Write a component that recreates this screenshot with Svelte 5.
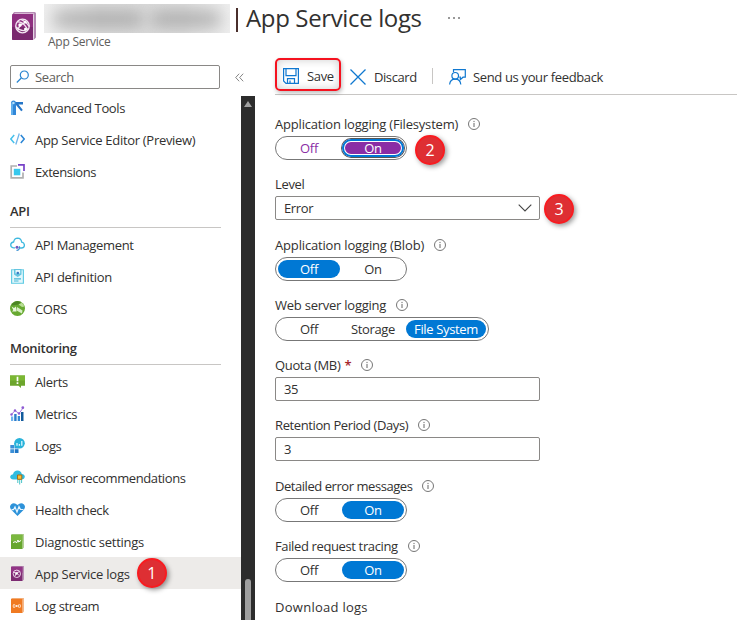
<script>
  const groups = [
    { title: '', items: [
      { label: 'Advanced Tools', icon: 'tools' },
      { label: 'App Service Editor (Preview)', icon: 'code', track: -0.3 },
      { label: 'Extensions', icon: 'ext', track: -0.45 },
    ] },
    { title: 'API', items: [
      { label: 'API Management', icon: 'cloud' },
      { label: 'API definition', icon: 'def', track: -0.28 },
      { label: 'CORS', icon: 'cors' },
    ] },
    { title: 'Monitoring', items: [
      { label: 'Alerts', icon: 'alerts' },
      { label: 'Metrics', icon: 'metrics' },
      { label: 'Logs', icon: 'logs' },
      { label: 'Advisor recommendations', icon: 'advisor', track: -0.4 },
      { label: 'Health check', icon: 'health' },
      { label: 'Diagnostic settings', icon: 'diag', track: -0.25 },
      { label: 'App Service logs', icon: 'book', step: 1, track: -0.22 },
      { label: 'Log stream', icon: 'stream' },
    ] },
  ];

  const fields = [
    { label: 'Application logging (Filesystem)', info: true, options: ['Off', 'On'], value: 'On', focus: true, step: 2, track: -0.19 },
    { label: 'Level', select: 'Error', step: 3 },
    { label: 'Application logging (Blob)', info: true, options: ['Off', 'On'], value: 'Off', gap: 13, track: -0.16 },
    { label: 'Web server logging', info: true, options: ['Off', 'Storage', 'File System'], value: 'File System', track: -0.24 },
    { label: 'Quota (MB)', required: true, info: true, input: '35' },
    { label: 'Retention Period (Days)', info: true, input: '3', track: -0.39 },
    { label: 'Detailed error messages', info: true, options: ['Off', 'On'], value: 'On', gap: 13, track: -0.45 },
    { label: 'Failed request tracing', info: true, options: ['Off', 'On'], value: 'On', track: -0.37 },
  ];
</script>

{#snippet bookIcon(w, h)}
  <svg width={w} height={h} viewBox="0 0 24 28">
    <path d="M2 0h20.500q1.500 0 1.500 1.500v24l-2.500 2.500V3H0z" fill="#b58ab3" />
    <path d="M2.500 1h19v25h-19z" fill="#f1e5f0" />
    <path d="M1.500 1.800H21V28H1.500Q0 28 0 26.500V3.300Q0 1.800 1.500 1.800z" fill="#8f2f80" />
    <path d="M0 15h21v13H0z" fill="#6f2766" opacity=".65" />
    <g fill="none" stroke="#f4e8f3" stroke-width="1.300">
      <circle cx="10.500" cy="14" r="6.800" />
      <path d="M5.500 10q5-1 10 7M6 18.500q1-7 9.500-8.500M4 15q6 6 12 2M9 7.500q6 3 8 7" />
    </g>
    <g fill="#fff"><circle cx="8" cy="13" r="1.700" /><circle cx="13.500" cy="17" r="1.500" /><circle cx="13" cy="10" r="1.300" /></g>
  </svg>
{/snippet}

{#snippet navIcon(name)}
  {#if name === 'book'}
    <svg width="15" height="15" viewBox="0 0 15 15">
      <path d="M2.500 0H14v13.500L12.500 15V1H1z" fill="#bb93b8" /><path d="M1 .8h11.500V15H1z" fill="#7d2b72" /><path d="M1 .8h11.500v6H1z" fill="#923485" />
      <circle cx="6.800" cy="7.800" r="3.700" fill="none" stroke="#ecd5ea" /><path d="M4 6.500q3-.5 5 3M5 10q.5-3.500 4.500-4.500" fill="none" stroke="#ecd5ea" /><circle cx="6.500" cy="7.500" r="1.200" fill="#fff" />
    </svg>
  {:else}
    <svg width="15" height="15" viewBox="0 0 15 15">
      {#if name === 'tools'}
        <path d="M1 3.500Q1 .5 3.500.5T6 3.500V15H1z" fill="#3187d8" />
        <path d="M1 3.500V15h2V2z" fill="#62b0ed" />
        <circle cx="3.500" cy="3" r="1.200" fill="#b6e1fa" />
        <path d="M5.500 2H13v2.500H8.500L12.800 10l-1.600 1.300L6 5z" fill="#2576c8" />
      {:else if name === 'code'}
        <path d="M4.200 3L.8 7l3.400 4" fill="none" stroke="#45c1ec" stroke-width="1.500" />
        <path d="M10.800 3l3.400 4-3.400 4" fill="none" stroke="#2b86d6" stroke-width="1.500" />
        <path d="M9.300 1.500L5.800 12.500" stroke="#6fb5ea" stroke-width="1.300" />
      {:else if name === 'ext'}
        <path d="M7 2H1.200v11.800H13V8.500" fill="none" stroke="#b0b0b0" stroke-width="1.700" />
        <path d="M3.800 4.800h6.500v6.500H3.800z" fill="#37c8ed" />
        <path d="M8 .9h6v6" fill="none" stroke="#7742c8" stroke-width="1.700" />
      {:else if name === 'cloud'}
        <path d="M5 10.800H3.500Q.7 10.500.7 7.800 1 5.200 3.600 5 4.400 1.200 7.700 1.200q3.500.2 4 4 2.700.5 2.700 3 0 2.600-2.900 2.800H9.500" fill="none" stroke="#3fb9df" stroke-width="1.300" />
        <circle cx="7" cy="10.300" r="1.500" fill="#7456bd" /><path d="M6.500 13.300q3.300 0 3-4" fill="none" stroke="#3a91d3" stroke-width="1.200" />
      {:else if name === 'def'}
        <path d="M1 .3h13v14.500H1z" fill="#63cce4" /><path d="M2.200 1.200h10.600v12.600H2.200z" fill="#e2f6fb" />
        <path d="M4 0h7.500v5.500L7.700 8 4 5.500z" fill="#65c5e0" /><path d="M5.500 1h4.700v3.500H5.500z" fill="#e8f8fc" />
        <circle cx="7.800" cy="4" r="1.300" fill="#397ac4" /><path d="M4 9.800h7M4 12h4.500" stroke="#45b8d8" stroke-width="1.200" />
      {:else if name === 'cors'}
        <circle cx="7.500" cy="7.500" r="7.500" fill="#67a931" />
        <path d="M1 4.500Q3 1 7.500.1L11 1 8.500 3.500 5 4z" fill="#4c8524" />
        <path d="M8.500 3.500L12 1.800 14.500 5.500 12 6z" fill="#b9df95" />
        <path d="M1.500 5.500L4 7l2-1.500.5 5H2l1.300-1.500z" fill="#e9f6dd" />
        <path d="M7 6l5.500 3.500-.5 3-5.500-3z" fill="#d8efc4" />
      {:else if name === 'alerts'}
        <path d="M0 1.500h15v10.200h-4V14l-2.500-2.300H0z" fill="#6ca52c" /><path d="M0 1.500h15v5H0z" fill="#7bb733" />
        <path d="M7.500 2.700v4.500M7.500 8.300v1.600" stroke="#fff" stroke-width="1.700" />
      {:else if name === 'metrics'}
        <path d="M1 10.500h2.200V15H1z" fill="#6fb2ee" /><path d="M4.200 8h2.400v7H4.200z" fill="#2b7ccb" /><path d="M7.700 10h2.300v5H7.700z" fill="#3288d3" /><path d="M11 6h2.500v9H11z" fill="#125a9c" />
        <path d="M1.500 8.500L5 4.500l4 3L13 2" fill="none" stroke="#a176dc" /><g fill="#8e5bd3"><circle cx="1.500" cy="8.500" r="1.200" /><circle cx="5" cy="4.500" r="1.200" /><circle cx="9" cy="7.500" r="1.200" /><circle cx="12.800" cy="1.700" r="1.400" /></g>
      {:else if name === 'logs'}
        <path d="M.3 7h3.800v3.500H.3zM.3 11.200h3.800V15H.3z" fill="#3b8fd7" /><path d="M4.800 11.200h3.700V15H4.800z" fill="#1e75c4" /><path d="M4.800 7h3.700v3.500H4.800z" fill="#3b8fd7" />
        <circle cx="9.500" cy="5.300" r="5.300" fill="#29b3da" /><path d="M4.500 10.500V5h4z" fill="#29b3da" /><path d="M7 7.800V5M9.400 7.800V6M11.800 7.800V3" stroke="#d9f6ff" stroke-width="1.300" />
      {:else if name === 'advisor'}
        <path d="M3.300 9.500Q0 9 .2 6.500.5 4.500 3 4.200 4 .5 7.500.5q3.500.1 4.300 3.600 3 .3 3 2.900-.2 2.300-3 2.500z" fill="#2fbce0" />
        <path d="M7.800 9v4M9.700 9v5.500M11.600 9v4" stroke="#4cc5c9" /><path d="M7.500 5h4.300v4.300H7.500z" fill="#f8c136" stroke="#a86b15" />
      {:else if name === 'health'}
        <path d="M7.500 14L1 7.500Q-1 4.700 1 2.500 4-.4 7.500 3 11-.4 14 2.500q2 2.200 0 5z" fill="#2d92d9" />
        <path d="M1.500 7.700h2L5 5l2 5 2-5.500 1.500 3h3" fill="none" stroke="#e6f5ff" stroke-width="1.200" />
      {:else if name === 'diag'}
        <path d="M2 0h12v13.500L12.500 15V1.500H1z" fill="#b4cf95" /><path d="M1 .8h11.500V15H1z" fill="#66a62e" /><path d="M1 .8h11.500v6H1z" fill="#7bb83f" />
        <path d="M3 8.500l2.500-1 1 1.500 1.500-3 .5 2 2.500-1.500" fill="none" stroke="#fff" />
      {:else if name === 'stream'}
        <path d="M2 0h12v13.500L12.500 15V1.500H1z" fill="#f4b98b" /><path d="M1 .8h11.500V15H1z" fill="#f07a22" />
        <circle cx="6.800" cy="8" r=".9" fill="#fff" /><path d="M3.800 6.200q-1.500 1.800 0 3.600M9.800 6.200q1.500 1.800 0 3.600M4.500 6.200q1.500 1.800 0 3.600M9.100 6.200q-1.500 1.800 0 3.600" fill="none" stroke="#ffe6d2" stroke-width=".9" />
      {/if}
    </svg>
  {/if}
{/snippet}

<div class="page">
  <header>
    <div class="logo">{@render bookIcon(24, 28)}</div>
    <div class="heading">
      <div class="title-row">
        <div class="redacted"><i class="a"></i><i class="b"></i></div>
        <span class="bar"></span>
        <h1>App Service logs</h1>
        <span class="more"><i></i><i></i><i></i></span>
      </div>
      <div class="kind">App Service</div>
    </div>
  </header>

  <div class="body">
    <aside>
      <div class="search-row">
        <div class="search">
          <svg width="14" height="14" viewBox="0 0 14 14" fill="none" stroke="#2a85d0" stroke-width="1.200"><circle cx="8.300" cy="5" r="4" /><path d="M5.300 8L.8 12.500" /></svg>
          <span>Search</span>
        </div>
        <svg class="collapse" width="9" height="9" viewBox="0 0 9 9" fill="none" stroke="#777" stroke-width=".9"><path d="M4.200.7L.7 4.500l3.500 3.800M8.200.7L4.700 4.500l3.500 3.800" /></svg>
      </div>
      <div class="nav-wrap">
        <nav>
          {#each groups as g}
            {#if g.title}<div class="group">{g.title}</div>{/if}
            {#each g.items as item}
              <div class="item" class:active={item.step}>
                <span class="ico">{@render navIcon(item.icon)}</span>
                <span class="text" style:letter-spacing={item.track ? `${item.track}px` : null}>{item.label}</span>
                {#if item.step}<b class="step">{item.step}</b>{/if}
              </div>
            {/each}
          {/each}
        </nav>
        <div class="scroll"><i class="up"></i><i class="thumb"></i></div>
      </div>
    </aside>

    <main>
      <div class="toolbar">
        <div class="cmd save">
          <svg width="16" height="16" viewBox="0 0 16 16" fill="none" stroke="#1078d0" stroke-width="1.200"><path d="M.6.600h14.800v14.800H3L.6 13zM3 .6v7h10v-7M4.500 15.400v-4.800h7v4.800M7 15v-2.500" /></svg>
          <span>Save</span>
        </div>
        <div class="cmd discard">
          <svg width="16" height="16" viewBox="0 0 16 16" fill="none" stroke="#1078d0" stroke-width="1.300"><path d="M.5.500l15 15M15.500.500l-15 15" /></svg>
          <span>Discard</span>
        </div>
        <span class="sep"></span>
        <div class="cmd feedback">
          <svg width="17" height="16" viewBox="0 0 17 16" fill="none" stroke="#1078d0" stroke-width="1.200"><path d="M4.500 3V.6h11.800v7.600h-2.300l-2.700 2.500V8.200h-1" /><circle cx="6.200" cy="6.800" r="3.300" /><path d="M.6 15.500q.5-5.300 5.600-5.300t5.600 5.300" /></svg>
          <span>Send us your feedback</span>
        </div>
      </div>

      <div class="form">
        {#each fields as f}
          <div class="field" style:margin-top={f.gap ? `${f.gap}px` : null}>
            <div class="label">
              <span style:letter-spacing={f.track ? `${f.track}px` : null}>{f.label}</span>
              {#if f.required}<em>*</em>{/if}
              {#if f.info}
                <svg width="12" height="12" viewBox="0 0 12 12"><circle cx="6" cy="6" r="5.500" fill="none" stroke="#666" stroke-width=".9" /><path d="M6 5v4M6 2.900v1.200" stroke="#666" /></svg>
              {/if}
            </div>
            <div class="control">
              {#if f.options}
                <div class="toggle" class:focus={f.focus}>
                  {#each f.options as o}
                    <span class="opt" class:wide={o === 'File System'} class:on={o === f.value}>{o}</span>
                  {/each}
                </div>
              {:else}
                <div class="input">
                  <span>{f.select ?? f.input}</span>
                  {#if f.select}<svg width="14" height="8" viewBox="0 0 14 8" fill="none" stroke="#444" stroke-width="1.100"><path d="M.7.700L7 7 13.300.7" /></svg>{/if}
                </div>
              {/if}
              {#if f.step}<b class="step" class:three={f.step === 3}>{f.step}</b>{/if}
            </div>
          </div>
        {/each}
        <div class="label download">Download logs</div>
      </div>
    </main>
  </div>
</div>

<style>
  :global(body) { background: #fff; overflow: hidden; }
  .page { width: 737px; height: 620px; display: flex; flex-direction: column; overflow: hidden; font: 13px/20px 'Open Sans', 'Noto Sans', sans-serif; letter-spacing: -0.35px; color: #323130; white-space: nowrap; }
  svg { display: block; flex: none; }
  header { display: flex; height: 57px; flex: none; }
  .logo { padding: 12px 0 0 12px; width: 32px; box-sizing: border-box; margin-right: 12px; }
  .title-row { display: flex; height: 33px; }
  .redacted { width: 186px; height: 29px; margin-top: 4px; background: linear-gradient(90deg, #efefef, #dadada 30%, #dcdcdc 75%, #eee); overflow: hidden; display: flex; align-items: center; gap: 10px; padding-left: 10px; box-sizing: border-box; }
  .redacted i { height: 14px; background: #777; filter: blur(8px); opacity: .5; }
  .redacted .a { width: 88px; }
  .redacted .b { width: 68px; }
  .bar { width: 2px; height: 24px; background: #4a2f2c; margin: 8px 8px 0 6px; }
  h1 { font-size: 24px; line-height: 33px; font-weight: 400; letter-spacing: -0.36px; margin: 1px 0 0; width: 175px; }
  .more { display: flex; gap: 3px; margin: 17px 0 0 27px; }
  .more i { width: 2px; height: 2px; background: #777; border-radius: 1px; }
  .kind { font-size: 12px; line-height: 18px; margin-left: 4px; color: #605e5c; letter-spacing: -0.24px; }
  .body { display: flex; flex: 1; min-height: 0; }
  aside { width: 255px; display: flex; flex-direction: column; margin-right: 20px; }
  .search-row { display: flex; height: 39px; flex: none; }
  .search { width: 210px; height: 24px; margin: 8px 15px 0 10px; border: 1px solid #8a8886; border-radius: 2px; box-sizing: border-box; display: flex; align-items: center; gap: 5px; padding-left: 5px; color: #605e5c; letter-spacing: -0.4px; }
  .collapse { margin-top: 16px; }
  .nav-wrap { flex: 1; min-height: 0; display: flex; overflow: hidden; }
  nav { width: 241px; margin-top: -5px; }
  .item { display: flex; align-items: center; height: 32px; padding-left: 10px; }
  .item.active { background: #edebe9; }
  .ico { width: 25px; display: flex; }
  .text { padding-top: 2px; }
  .group { height: 41px; width: 211px; margin-left: 10px; box-sizing: border-box; border-bottom: 1px solid #c8c6c4; font-weight: 600; line-height: 48px; letter-spacing: -0.3px; }
  .scroll { width: 14px; background: #2c2c2c; display: flex; flex-direction: column; align-items: center; justify-content: space-between; }
  .up { margin-top: 5px; border: 4px solid transparent; border-top: 0; border-bottom: 6px solid #a0a0a0; }
  .thumb { width: 6px; height: 41px; border-radius: 3px 3px 0 0; background: #9f9f9f; }
  main { flex: 1; }
  .toolbar { height: 38px; box-sizing: border-box; border-bottom: 1px solid #c8c6c4; display: flex; padding-top: 1px; }
  .cmd { display: flex; align-items: center; height: 38px; gap: 8px; }
  .cmd.save { width: 66px; height: 33px; box-sizing: border-box; border: 2px solid #f5121f; border-radius: 5px; padding: 3px 0 0 6px; box-shadow: 1px 2px 4px #0004, inset 0 0 8px #0003; }
  .discard { margin-left: 9px; width: 82px; letter-spacing: -0.42px; }
  .discard, .feedback { height: 37px; }
  .feedback { gap: 7px; }
  .sep { width: 1px; height: 16px; background: #c8c6c4; margin: 10px 16px 0 0; }
  .form { padding-top: 5px; }
  .field { margin-top: 12px; }
  .label { height: 24px; line-height: 25px; display: flex; align-items: center; gap: 10px; }
  .label em { color: #a4262c; font-style: normal; font-weight: 600; margin: 0 0 0 -6px; }
  .control { display: flex; align-items: center; height: 24px; }
  .toggle { height: 24px; box-sizing: border-box; border: 1px solid #777; border-radius: 12px; padding: 2px; display: flex; gap: 2px; }
  .opt { width: 62px; height: 18px; line-height: 18px; border-radius: 9px; text-align: center; }
  .opt.wide { width: 80px; }
  .on { background: #0078d4; color: #fff; }
  .focus .opt { color: #8a2da5; }
  .focus .on { color: #fff; background: #8a2da5; box-shadow: inset 0 0 0 2px #0078d4, inset 0 0 0 3px #fff, 0 0 0 1px #555; }
  .input { width: 265px; height: 24px; border: 1px solid #8a8886; border-radius: 2px; box-sizing: border-box; display: flex; align-items: center; justify-content: space-between; padding: 0 8px; }
  .input svg { margin-right: -1px; }
  .step { width: 30px; height: 30px; box-sizing: border-box; border: 2px solid #f91b20; border-radius: 50%; background: #de2f33; color: #fff; font-size: 16px; line-height: 26px; text-align: center; font-weight: 400; box-shadow: 2px 2px 5px #0006; margin-left: 8px; flex: none; letter-spacing: 0; position: relative; top: 2px; }
  .item .step { margin-left: 7px; top: 0; }
  .step.three { margin-left: 4px; top: 1px; }
  .download { margin-top: 13px; letter-spacing: 0.27px; }
</style>
